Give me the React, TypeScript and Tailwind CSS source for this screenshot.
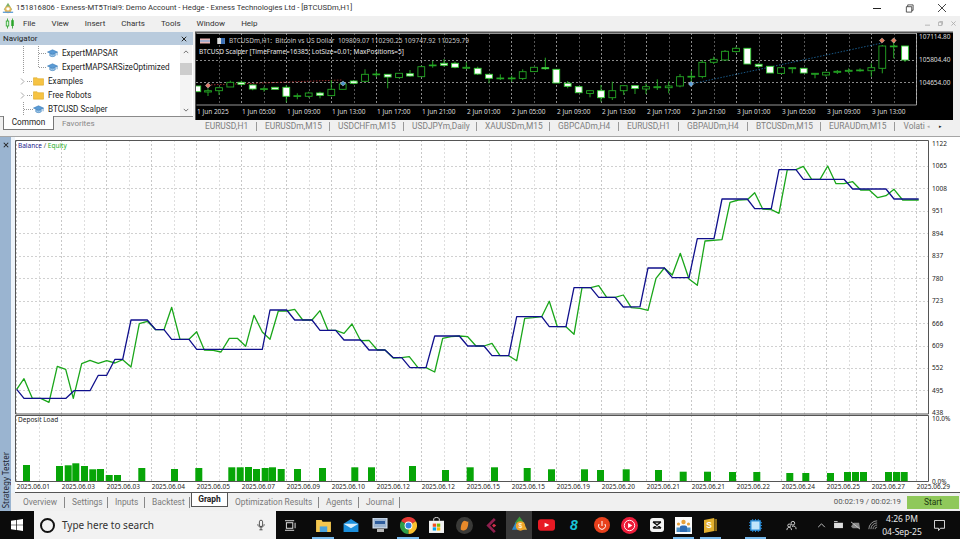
import React from "react";

type P = [number, number];
const z = (a: number[], ox: number, oy: number): P[] => {
  const r: P[] = [];
  for (let i = 0; i < a.length; i += 2) r.push([ox + a[i] / 3, oy + a[i + 1] / 3]);
  return r;
};
const pts = (p: P[]) => p.map((q) => `${q[0].toFixed(1)},${q[1].toFixed(1)}`).join(" ");

const balance = [
  ...z([50,358,72,385,198,385,222,362,270,362,295,316,320,316,345,268,368,268,393,150,442,150,467,179,492,179,515,208,567,208,590,238,787,238,810,120,860,120,884,150,936,150], 0, 270),
  ...z([0,181,47,181,72,210,122,210,147,240,195,240,220,263,245,263,270,293,318,293,344,198,418,198,443,228,492,228,516,257,566,257,590,140,665,140,688,170,738,170,762,53,812,53,836,82,886,82,910,111], 320, 270),
  ...z([0,515,24,399,73,399,97,428,147,428,172,311,222,311,246,192,322,192,344,221,394,221,417,104,468,104,490,133,612,133,638,162,738,162,762,192,836,192], 640, 135),
];
const equity = [
  ...z([50,358,72,326,97,385,122,385,147,397,172,289,197,298,220,385,245,281,270,271,295,280,320,272,345,279,368,269,393,291,418,161,442,154,467,179,492,179,515,112,540,208,567,208,590,185,613,240,640,241,663,246,688,205,712,205,737,229,762,136,787,186,810,208,835,123,860,123,884,118,908,150,936,150], 0, 270),
  ...z([0,122,24,181,47,181,72,190,96,162,122,212,147,211,172,240,195,240,220,264,245,263,268,260,294,293,318,293,344,306,368,205,393,200,418,198,443,200,468,228,492,228,516,220,540,257,566,257,590,272,614,145,640,143,665,140,688,94,712,170,738,170,762,193,786,53,812,53,836,47,860,82,886,82,910,75,934,113], 320, 270),
  ...z([0,520,24,526,48,430,73,399,97,420,121,355,147,432,172,451,195,318,246,314,270,202,295,195,322,194,344,173,368,222,394,224,417,235,442,104,468,104,490,94,515,133,540,133,563,93,588,146,612,146,638,140,662,165,688,165,713,188,738,182,762,163,788,195,836,195], 640, 135),
];

const barsL: number[][] = [[69,195],[168,198],[194,196],[217,190],[243,198],[268,208],[291,207],[317,225],[342,225],[415,204],[513,207],[586,204],[685,202],[710,202],[735,201],[759,207],[785,204],[807,202],[833,207],[882,207],[957,204],[1054,202],[1104,202],[1227,198],[1326,210],[1400,202]];
const barsR: number[][] = [[33,202],[131,204],[204,208],[303,208],[351,210],[428,208],[525,210],[599,215],[672,215],[747,216],[820,216],[919,219],[967,219],[1041,219],[1092,216],[1116,216],[1140,216],[1215,216],[1239,216],[1262,216]];
const bars = [
  ...barsL.map(([x, t]) => ({ x: x / 3, t: 400 + t / 3 })),
  ...barsR.map(([x, t]) => ({ x: 480 + x / 3, t: 400 + t / 3 })),
];

const cL: (number | boolean)[][] = [
  [22,183,200,183,200,true],[54,197,201,190,213,false],[87,188,197,188,210,false],[121,172,186,167,186,false],[154,172,178,167,182,true],[188,180,192,178,196,true],[222,191,193,185,200,false],[255,187,193,187,193,true],[289,187,214,180,232,true],[322,212,214,205,223,false],[356,204,214,200,218,false],[390,204,211,200,220,true],[424,193,212,165,214,false],[458,177,193,170,193,false],[491,168,175,165,178,true],[525,148,169,133,170,false],[559,147,149,138,156,false],[593,148,156,148,190,true],[627,145,158,145,160,false],[660,146,153,135,155,true],[694,125,155,122,156,false],[728,120,122,108,128,false],[762,115,121,102,125,true],[795,115,127,110,130,true],[829,127,130,112,132,false],[863,130,147,125,150,true],[897,148,160,148,175,true],[931,159,161,148,165,false],[965,159,161,152,170,false],[998,140,160,133,165,false],[1032,127,140,127,140,false],[1066,128,131,98,135,true],[1099,133,174,133,174,true],[1133,175,184,168,190,true],
];
const cR: (number | boolean)[][] = [
  [26,260,278,260,278,true],[60,272,280,272,292,false],[93,272,293,255,305,true],[127,272,293,245,300,false],[161,257,272,257,285,false],[195,257,265,257,282,true],[228,260,267,250,282,false],[262,260,263,238,270,false],[296,258,263,245,280,false],[330,230,258,222,262,false],[364,229,231,212,245,false],[397,187,230,180,235,false],[431,178,187,170,192,false],[465,154,180,150,182,false],[498,145,155,140,158,false],[532,145,192,145,192,true],[566,193,199,190,205,true],[600,199,219,199,219,true],[633,203,220,203,220,false],[667,203,206,203,220,false],[701,205,219,205,219,true],[735,220,223,220,235,false],[768,217,225,215,230,false],[802,214,217,210,222,false],[836,211,214,205,220,false],[870,210,212,205,215,false],[904,203,212,190,230,false],[937,138,205,135,220,false],[971,138,140,125,175,false],[1005,138,180,138,186,true],
];
const candles = [
  ...cL.map((c) => ({ x: 190 + (c[0] as number) / 3, a: 25 + (c[1] as number) / 3, b: 25 + (c[2] as number) / 3, h: 25 + (c[3] as number) / 3, l: 25 + (c[4] as number) / 3, w: c[5] as boolean })),
  ...cR.map((c) => ({ x: 570 + (c[0] as number) / 3, a: (c[1] as number) / 3, b: (c[2] as number) / 3, h: (c[3] as number) / 3, l: (c[4] as number) / 3, w: c[5] as boolean })),
];

const miniDates = ["1 Jun 2025","1 Jun 05:00","1 Jun 09:00","1 Jun 13:00","1 Jun 17:00","1 Jun 21:00","2 Jun 01:00","2 Jun 05:00","2 Jun 09:00","2 Jun 13:00","2 Jun 17:00","2 Jun 21:00","3 Jun 01:00","3 Jun 05:00","3 Jun 09:00","3 Jun 13:00"];
const dates = ["01","03","03","04","05","07","09","10","12","12","15","15","19","20","21","21","22","24","25","27","29"];
const yLabels = [1122,1065,1008,951,894,837,780,723,666,609,552,495,438];
const chartTabs = [
  ["EURUSD,H1", 42], ["EURUSDm,M15", 55], ["USDCHFm,M15", 56], ["USDJPYm,Daily", 55], ["XAUUSDm,M15", 55], ["GBPCADm,H4", 51], ["EURUSD,H1", 42], ["GBPAUDm,H4", 51], ["BTCUSDm,M15", 55], ["EURAUDm,M15", 56],
] as const;

const vGrid = Array.from({ length: 41 }, (_, i) => Math.floor(16.7 + i * 22.5) + 0.5);

function Cap({ className = "" }: { className?: string }) {
  return (
    <svg viewBox="0 0 12 10" className={`w-[11px] h-[10px] shrink-0 ${className}`}>
      <path d="M0.5 4 6 1.5 11.5 4 6 6.5Z" fill="#5b9bd5" stroke="#2f75b5" strokeWidth="0.6" />
      <path d="M3 5.5V8C4.5 9.3 7.5 9.3 9 8V5.5L6 7Z" fill="#9cc6e8" stroke="#2f75b5" strokeWidth="0.6" />
      <path d="M11 4V7.5" stroke="#2f75b5" strokeWidth="0.7" />
    </svg>
  );
}
function Folder() {
  return (
    <svg viewBox="0 0 12 10" className="w-[11px] h-[10px] shrink-0">
      <path d="M0.5 1.5H4.5L5.5 2.5H11.5V9.5H0.5Z" fill="#f6c343" stroke="#d9a520" strokeWidth="0.6" />
    </svg>
  );
}
function Guide({ w, v1, v2, half, hFrom, hTo, chev }: { w: number; v1?: boolean; v2?: boolean; half?: boolean; hFrom?: number; hTo?: number; chev?: boolean }) {
  return (
    <svg width={w} height={14} className="shrink-0">
      {v1 && <path d="M23.5 0V14" stroke="#999" strokeDasharray="1 1" />}
      {v2 && <path d={half ? "M38.5 0V7" : "M38.5 0V14"} stroke="#999" strokeDasharray="1 1" />}
      {hFrom !== undefined && <path d={`M${hFrom} 7.5H${hTo}`} stroke="#999" strokeDasharray="1 1" />}
      {chev && <path d="M21 4.5 24 7.5 21 10.5" fill="none" stroke="#aaa" />}
    </svg>
  );
}
function NavRow({ guide, icon, label }: { guide: React.ReactNode; icon: React.ReactNode; label: string }) {
  return (
    <div className="flex items-center h-[14px]">
      {guide}
      {icon}
      <span className="ml-[4px] text-[8.15px] leading-[14px] text-[#222] whitespace-nowrap">{label}</span>
    </div>
  );
}

function Navigator() {
  return (
    <div className="w-[193px] h-[98px] mt-[1px] flex flex-col bg-white shrink-0 font-['Roboto',sans-serif]">
      <div className="h-[13px] bg-[#b9cbdd] flex items-center justify-between pl-[3px] pr-[6px]">
        <span className="text-[8px] text-[#222]">Navigator</span>
        <svg viewBox="0 0 8 8" className="w-[6px] h-[6px]"><path d="M1 1 7 7M7 1 1 7" stroke="#222" strokeWidth="1.3" /></svg>
      </div>
      <div className="flex h-[71px]">
        <div className="flex-1 pt-[1px]">
          <NavRow guide={<Guide w={47} v1 v2 hFrom={39} hTo={47} />} icon={<Cap />} label="ExpertMAPSAR" />
          <NavRow guide={<Guide w={47} v1 v2 half hFrom={39} hTo={47} />} icon={<Cap />} label="ExpertMAPSARSizeOptimized" />
          <NavRow guide={<Guide w={33} chev hFrom={27} hTo={33} />} icon={<Folder />} label="Examples" />
          <NavRow guide={<Guide w={33} chev hFrom={27} hTo={33} />} icon={<Folder />} label="Free Robots" />
          <NavRow guide={<Guide w={33} v1 hFrom={24} hTo={33} />} icon={<Cap />} label="BTCUSD Scalper" />
        </div>
        <div className="w-[12px] mr-[1px] flex flex-col items-center bg-[#f4f4f4]">
          <svg viewBox="0 0 8 5" className="w-[6px] h-[4px] mt-[5px]"><path d="M1 4 4 1 7 4" fill="none" stroke="#666" strokeWidth="1.2" /></svg>
          <div className="w-full h-[12px] mt-[9px] bg-[#cdcdcd]" />
          <svg viewBox="0 0 8 5" className="w-[6px] h-[4px] mt-auto mb-[4px]"><path d="M1 1 4 4 7 1" fill="none" stroke="#666" strokeWidth="1.2" /></svg>
        </div>
      </div>
      <div className="h-[14px] bg-[#f0f0f0] border-t border-[#8a8a8a] flex pl-[3px]">
        <div className="w-[51px] h-[14px] -mt-[1px] bg-white border-l border-r border-b border-[#777] text-[8.2px] leading-[13px] text-center text-[#222]">Common</div>
        <div className="pl-[8px] text-[8px] leading-[13px] text-[#888]">Favorites</div>
      </div>
    </div>
  );
}

function MiniChart() {
  return (
    <div className="relative h-[88px] bg-black flex flex-col border-l border-t border-[#555]">
      <div className="absolute left-[4px] top-[3px] flex items-center">
        <svg viewBox="0 0 16 8" className="w-[10px] h-[6px] shrink-0"><rect width="16" height="8" fill="#e9b8b8" /><rect y="3" width="16" height="2" fill="#7fa6d8" /></svg>
        <svg viewBox="0 0 10 8" className="w-[8px] h-[6px] ml-[7px] shrink-0"><rect width="10" height="8" fill="#ddd" /><rect x="5" width="5" height="8" fill="#3a6fb5" /></svg>
        <span className="ml-[4px] text-[6.5px] leading-[9px] text-[#c8c8c8] whitespace-pre">BTCUSDm,H1:  Bitcoin vs US Dollar  109809.07 110290.25 109747.92 110259.79</span>
      </div>
      <div className="absolute left-[3px] top-[14px] text-[6.5px] leading-[9px] text-[#e8e8e8] whitespace-nowrap">BTCUSD Scalper [TimeFrame=16385; LotSize=0.01; MaxPositions=5]</div>
      <div className="flex h-[73px]">
        <svg viewBox="196 33 722 73" className="w-[722px] h-[73px] shrink-0">
          {Array.from({ length: 33 }, (_, i) => (
            <path key={i} d={`M${Math.floor(219 + i * 22.5) + 0.5} 33V105`} stroke={i % 2 === 1 ? "#8a8a8a" : "#555"} strokeDasharray="2 2" />
          ))}
          {[60.5, 82.5].map((y) => (
            <path key={y} d={`M196 ${y}H917`} stroke="#8a8a8a" strokeDasharray="2 2" />
          ))}
          <path d="M208 85 342 80" stroke="#b33" strokeDasharray="1.5 1.5" strokeWidth="0.8" fill="none" />
          <path d="M691 84 882 43" stroke="#1f6fa8" strokeDasharray="1.5 1.5" strokeWidth="0.8" fill="none" />
          {candles.map((c, i) => (
            <g key={i}>
              <path d={`M${c.x.toFixed(1)} ${c.h.toFixed(1)}V${c.l.toFixed(1)}`} stroke="#28b428" strokeWidth="0.9" />
              <rect x={(c.x - 3.4).toFixed(1)} y={c.a.toFixed(1)} width="6.8" height={Math.max(c.b - c.a, 0.8).toFixed(1)} fill={c.w ? "#ffffff" : "#000000"} stroke={c.w ? "#35d035" : "#24a824"} strokeWidth="0.9" />
            </g>
          ))}
          {[[208, 85.5, "#e07a6a"], [882, 40.5, "#e07a5a"], [893.7, 40.5, "#e07a5a"], [343, 83.5, "#4a90c8"], [691, 84, "#5aa0dc"]].map(([x, y, f], i) => (
            <path key={i} d={`M${(x as number) - 2.6} ${y}L${x} ${(y as number) - 2.6}L${(x as number) + 2.6} ${y}L${x} ${(y as number) + 2.6}Z`} fill={f as string} stroke="#eee" strokeWidth="0.4" />
          ))}
          <path d="M196.5 33.5H916.5V105H196.5" fill="none" stroke="#bbb" strokeWidth="0.8" />
        </svg>
        <div className="flex flex-col pl-[1px]">
          {["107114.80", "105804.40", "104654.00"].map((t) => (
            <div key={t} className="h-[23px] text-[6.5px] leading-[8px] text-[#ddd]">{t}</div>
          ))}
        </div>
      </div>
      <div className="flex pl-[1px] pt-[1px]">
        {miniDates.map((d, i) => (
          <div key={i} className="w-[45px] shrink-0 text-[6.5px] leading-[9px] text-[#ddd] whitespace-nowrap">{d}</div>
        ))}
      </div>
    </div>
  );
}

function ChartTabs() {
  return (
    <div className="h-[13px] bg-[#f0f0f0] flex items-center pl-[2px] text-[8.4px] text-[#808080] whitespace-nowrap overflow-hidden font-['Roboto',sans-serif]">
      {chartTabs.map(([t, w], i) => (
        <div key={i} className="flex items-center h-[9px] px-[8.5px] border-r border-[#999] first:pl-[8px]">
          <span className="inline-block" style={{ width: w }}>{t}</span>
        </div>
      ))}
      <span className="pl-[9px] w-[30px]">Volati</span>
      <span className="ml-[2px] text-[5px] text-[#aaa]">◂</span>
      <span className="ml-[9px] text-[5px] text-[#222]">▸</span>
    </div>
  );
}

function Tester() {
  const bTabs = [
    ["Overview", 35], ["Settings", 29], ["Inputs", 23], ["Backtest", 31],
  ] as const;
  const aTabs = [["Optimization Results", 77], ["Agents", 26], ["Journal", 27]] as const;
  return (
    <div className="flex flex-col h-[378px]">
      <div className="h-[4px] bg-[#f0f0f0] border-b border-[#a5a5a5]" />
      <div className="flex h-[374px] bg-white">
        <div className="w-[11px] bg-[#9ab4d0] flex flex-col items-center justify-between pt-[5px] pb-[3px] shrink-0">
          <svg viewBox="0 0 8 8" className="w-[6px] h-[6px]"><path d="M1 1 7 7M7 1 1 7" stroke="#222" strokeWidth="1.4" /></svg>
          <span className="text-[8px] leading-[11px] text-[#1c2430] [writing-mode:vertical-rl] rotate-180 whitespace-nowrap">Strategy Tester</span>
        </div>
        <div className="w-[4px] bg-[#eef4fa] shrink-0" />
        <div className="flex-1 min-w-0 flex flex-col pt-[3px]">
          <div className="flex h-[275px]">
            <div className="relative w-[914px] h-[275px] shrink-0">
              <svg viewBox="15 140 914 275" className="w-[914px] h-[275px]">
                {vGrid.map((x, i) => (
                  <path key={i} d={`M${x} 140V414`} stroke={i % 2 === 0 ? "#c8c8c8" : "#dedede"} strokeDasharray="2 2" />
                ))}
                {yLabels.slice(1, -1).map((_, i) => (
                  <path key={i} d={`M15 ${Math.floor(166.45 + i * 22.45) + 0.5}H928`} stroke="#d0d0d0" strokeDasharray="2 2" />
                ))}
                <polyline points={pts(equity)} fill="none" stroke="#1aa61a" strokeWidth="1.3" strokeLinejoin="round" />
                <polyline points={pts(balance)} fill="none" stroke="#10108c" strokeWidth="1.3" strokeLinejoin="round" />
                <path d="M15.5 414V140.5H928.5V414Z" fill="none" stroke="#555" strokeWidth="1" />
              </svg>
              <div className="absolute left-[3px] top-[2px] text-[6.5px] leading-[8px] whitespace-nowrap">
                <span className="text-[#1c1c8c]">Balance</span>
                <span className="text-[#555]"> / </span>
                <span className="text-[#1fae1f]">Equity</span>
              </div>
            </div>
            <div className="pl-[3px] flex flex-col">
              {yLabels.map((y) => (
                <div key={y} className="h-[22.45px] shrink-0 text-[6.5px] leading-[8px] text-[#222]">{y}</div>
              ))}
            </div>
          </div>
          <div className="flex h-[67px]">
            <div className="relative w-[914px] h-[67px] shrink-0">
              <svg viewBox="15 415 914 67" className="w-[914px] h-[67px]">
                {vGrid.map((x, i) => (
                  <path key={i} d={`M${x} 415V481`} stroke={i % 2 === 0 ? "#c8c8c8" : "#dedede"} strokeDasharray="2 2" />
                ))}
                {bars.map((b, i) => (
                  <rect key={i} x={b.x.toFixed(1)} y={b.t.toFixed(1)} width="7" height={(481 - b.t).toFixed(1)} fill="#07a507" />
                ))}
                <path d="M15.5 481.5V415.5H928.5V481.5Z" fill="none" stroke="#555" strokeWidth="1" />
              </svg>
              <div className="absolute left-[3px] top-[1px] text-[6.5px] leading-[8px] text-[#222] whitespace-nowrap">Deposit Load</div>
            </div>
            <div className="pl-[3px] flex flex-col justify-between h-[71px] shrink-0">
              <div className="text-[6.5px] leading-[8px] text-[#222]">10.0%</div>
              <div className="text-[6.5px] leading-[8px] text-[#222]">0.0%</div>
            </div>
          </div>
          <div className="flex h-[11px] pl-[1.7px] border-b border-[#555] overflow-hidden shrink-0">
            {dates.map((d, i) => (
              <div key={i} className="w-[45px] shrink-0 text-[6.5px] leading-[9px] text-[#222] whitespace-nowrap">2025.06.{d}</div>
            ))}
          </div>
          <div className="h-[18px] -ml-[4px] bg-[#f0f0f0] flex items-center text-[8.4px] text-[#7a7a7a] whitespace-nowrap font-['Roboto',sans-serif]">
            <div className="w-[5px]" />
            {bTabs.map(([t, w]) => (
              <div key={t} className="flex items-center h-[11px] pl-[7px] pr-[6px] border-r border-[#888]">
                <span className="inline-block" style={{ width: w }}>{t}</span>
              </div>
            ))}
            <div className="w-[37px] h-[14px] ml-[1px] self-start bg-white border-l border-r border-b border-[#555] text-center leading-[13px] font-bold text-[#222]">Graph</div>
            {aTabs.map(([t, w]) => (
              <div key={t} className="flex items-center h-[11px] pl-[7px] pr-[6px] border-r border-[#888] last:border-r-0">
                <span className="inline-block" style={{ width: w }}>{t}</span>
              </div>
            ))}
            <div className="ml-auto text-[7.8px] text-[#555] pr-[6px]">00:02:19 / 00:02:19</div>
            <div className="w-[52px] h-[13px] mr-[1px] bg-[#8fc85a] text-[#1c3a10] text-center leading-[13px]">Start</div>
          </div>
        </div>
      </div>
    </div>
  );
}

function Slot({ w, active, bar, children }: { w: number; active?: boolean; bar?: boolean; children: React.ReactNode }) {
  return (
    <div className={`relative h-[28px] shrink-0 flex items-center justify-center ${active ? "bg-[#3a3a3a]" : ""}`} style={{ width: w }}>
      {children}
      {bar && <div className="absolute bottom-0 left-[3px] right-[3px] h-[2px] bg-[#76b9ed]" />}
    </div>
  );
}

function Taskbar() {
  return (
    <div className="h-[28px] bg-[#0b0b0b] flex items-center shrink-0">
      <div className="w-[34px] flex justify-center">
        <svg viewBox="0 0 12 12" className="w-[12px] h-[12px]"><path d="M0 1.7 5 1V5.7H0ZM5.7 .9 12 0V5.7H5.7ZM0 6.3H5V11L0 10.3ZM5.7 6.3H12V12L5.7 11.1Z" fill="#fff" /></svg>
      </div>
      <div className="w-[242px] h-[28px] bg-[#f2f2f2] flex items-center pl-[6px] pr-[11px] shrink-0">
        <div className="w-[15px] h-[15px] rounded-full border-2 border-[#111]" />
        <span className="ml-[7px] text-[10px] text-[#333]">Type here to search</span>
        <svg viewBox="0 0 10 14" className="ml-auto w-[8px] h-[12px]"><rect x="3" y="1" width="4" height="8" rx="2" fill="none" stroke="#333" /><path d="M1 6C1 11 9 11 9 6M5 10V13M3 13H7" fill="none" stroke="#333" /></svg>
      </div>
      <Slot w={33}>
        <svg viewBox="0 0 12 12" className="w-[11px] h-[11px] -ml-[5px]"><rect x="1.5" y="3" width="7" height="6" fill="none" stroke="#eee" /><path d="M0 .8H10M0 11.2H10M11 3V9" stroke="#eee" /></svg>
      </Slot>
      <Slot w={28} bar><svg viewBox="0 0 16 14" className="w-[15px] h-[13px]"><path d="M0 1H6L7 3H16V14H0Z" fill="#f4c750" /><rect x="4" y="8" width="8" height="6" fill="#4aa3df" /></svg></Slot>
      <Slot w={28}><svg viewBox="0 0 16 14" className="w-[16px] h-[13px]"><path d="M0 5 8 0 16 5V14H0Z" fill="#1b8fdc" /><path d="M0 5 8 10 16 5" fill="#d8eefc" /></svg></Slot>
      <Slot w={29}><svg viewBox="0 0 16 15" className="w-[16px] h-[15px]"><rect x="1" y="0" width="14" height="10" fill="#9eb6d2" stroke="#dfe8f2" /><rect x="3" y="3" width="10" height="3" fill="#2f5e9e" /><rect x="5" y="11" width="7" height="3" fill="#b5b5b5" /></svg></Slot>
      <Slot w={28} bar>
        <svg viewBox="0 0 20 20" className="w-[17px] h-[17px]">
          <path d="M10 10 18.7 5A10 10 0 0 0 1.3 5Z" fill="#e53935" />
          <path d="M10 10 1.3 5A10 10 0 0 0 10 20Z" fill="#2e9e48" />
          <path d="M10 10 10 20A10 10 0 0 0 18.7 5Z" fill="#fbc02d" />
          <circle cx="10" cy="10" r="4.6" fill="#fff" /><circle cx="10" cy="10" r="3.5" fill="#2f7fe0" />
        </svg>
      </Slot>
      <Slot w={28}><svg viewBox="0 0 16 17" className="w-[15px] h-[16px]"><path d="M5 4V2C5 0 11 0 11 2V4" fill="none" stroke="#eee" /><rect y="4" width="16" height="13" fill="#f2f2f2" /><rect x="4" y="7" width="3.6" height="3.4" fill="#f25022" /><rect x="8.4" y="7" width="3.6" height="3.4" fill="#7fba00" /><rect x="4" y="11" width="3.6" height="3.4" fill="#00a4ef" /><rect x="8.4" y="11" width="3.6" height="3.4" fill="#ffb900" /></svg></Slot>
      <Slot w={28}><svg viewBox="0 0 18 18" className="w-[17px] h-[17px]"><circle cx="9" cy="9" r="9" fill="#3a3a38" /><path d="M5 13C5 8 7 4 9 4C11 4 12 6 13 4.5C13 8 13 13 9 14C7 14.5 5 14 5 13Z" fill="#e8892a" /></svg></Slot>
      <Slot w={28}><svg viewBox="0 0 14 16" className="w-[14px] h-[15px]"><path d="M9 0 1 8 9 16 11 14 5 8 11 2Z" fill="#8e1f4d" /><path d="M9 6 11.5 8 9 10 7 8Z" fill="#d3304b" /></svg></Slot>
      <Slot w={26} active><svg viewBox="0 0 18 18" className="w-[17px] h-[18px]"><path d="M9 0 14 7H4Z" fill="#3d9a3d" /><path d="M1 14 5 6 9 14Z" fill="#2d8ac9" /><path d="M9 14 13 6 17 14Z" fill="#e8b23a" /><circle cx="10" cy="10" r="5" fill="#efa52a" /><text x="10" y="12.5" fontSize="7" textAnchor="middle" fill="#fff" fontFamily="Liberation Sans">$</text></svg></Slot>
      <Slot w={28}><svg viewBox="0 0 18 12" className="w-[17px] h-[12px]"><rect width="18" height="12" rx="3" fill="#e81a24" /><path d="M7 3.5 12 6 7 8.5Z" fill="#fff" /></svg></Slot>
      <Slot w={28}><span className="text-[14px] leading-[14px] italic font-bold text-[#19c4d8] font-['Liberation_Sans',sans-serif]">8</span></Slot>
      <Slot w={27}><svg viewBox="0 0 16 16" className="w-[16px] h-[16px]"><circle cx="8" cy="8" r="8" fill="#e8401c" /><path d="M5 7A3.5 3.5 0 1 0 11 7M8 4V9" fill="none" stroke="#fff" /></svg></Slot>
      <Slot w={28}><svg viewBox="0 0 18 18" className="w-[17px] h-[17px]"><circle cx="9" cy="9" r="9" fill="#ee1c3a" /><circle cx="9" cy="9" r="5.5" fill="none" stroke="#fff" /><path d="M7.5 6.3 12 9 7.5 11.7Z" fill="#fff" /></svg></Slot>
      <Slot w={27}><svg viewBox="0 0 14 14" className="w-[14px] h-[14px]"><rect width="14" height="14" rx="3" fill="#f4f4f4" /><path d="M3 4 11 10M11 4 3 10M3 4H11M3 10H11" stroke="#111" strokeWidth="1.5" fill="none" /></svg></Slot>
      <Slot w={27} bar><svg viewBox="0 0 17 17" className="w-[17px] h-[17px]"><rect width="17" height="17" fill="#fafafa" /><circle cx="8.5" cy="5" r="2.2" fill="#e8a13a" /><path d="M5 15V9.5C5 8 12 8 12 9.5V15Z" fill="#2f6db5" /><circle cx="3.5" cy="7" r="1.6" fill="#e8a13a" /><path d="M1.5 15V10.5H5V15Z" fill="#4a90c8" /><circle cx="13.5" cy="7" r="1.6" fill="#e8a13a" /><path d="M12 15V10.5H15.5V15Z" fill="#4a90c8" /></svg></Slot>
      <Slot w={27} bar><svg viewBox="0 0 14 16" className="w-[13px] h-[15px]"><path d="M0 2 11 0V14L0 16Z" fill="#e2b02f" /><path d="M11 1H14V14H11Z" fill="#8a6a16" /><text x="5.5" y="11" fontSize="9" fontWeight="700" textAnchor="middle" fill="#fff" fontFamily="Liberation Sans">S</text></svg></Slot>
      <div className="w-[18px] shrink-0" />
      <Slot w={27} bar><svg viewBox="0 0 14 14" className="w-[13px] h-[13px]"><rect x="2" y="2" width="10" height="10" fill="#bfe4fb" stroke="#2a8fdc" strokeWidth="1.4" /><path d="M4 0V2M7 0V2M10 0V2M4 12V14M7 12V14M10 12V14M0 4H2M0 7H2M0 10H2M12 4H14M12 7H14M12 10H14" stroke="#2a8fdc" /></svg></Slot>
      <div className="w-[13px] shrink-0" />
      <div className="w-[18px] shrink-0 flex justify-center"><svg viewBox="0 0 12 12" className="w-[11px] h-[11px]"><circle cx="7.5" cy="3.5" r="2" fill="none" stroke="#ddd" /><circle cx="3.5" cy="6" r="1.6" fill="none" stroke="#ddd" /><path d="M1 11C1 9 2 8 3.5 8S6 9 6 11M6.5 7C9 6 11 7 11 10" fill="none" stroke="#ddd" /></svg></div>
      <div className="w-[13px] shrink-0" />
      <div className="w-[17px] shrink-0 flex justify-center"><svg viewBox="0 0 10 6" className="w-[9px] h-[5px]"><path d="M1 5 5 1 9 5" fill="none" stroke="#ddd" /></svg></div>
      <div className="w-[17px] shrink-0 flex justify-center"><svg viewBox="0 0 12 9" className="w-[11px] h-[8px]"><rect x="1" y="2" width="10" height="6" fill="#ddd" /><path d="M1 .5H5" stroke="#ddd" /></svg></div>
      <div className="w-[17px] shrink-0 flex justify-center"><svg viewBox="0 0 12 10" className="w-[11px] h-[9px]"><path d="M1 6 4 2H10L11 8H3Z" fill="#888" /><path d="M1 1 11 9" stroke="#ccc" /></svg></div>
      <div className="w-[17px] shrink-0 flex justify-center"><svg viewBox="0 0 12 12" className="w-[10px] h-[10px]"><path d="M1 11A10 10 0 0 1 11 1M3.5 11A7.5 7.5 0 0 1 11 3.5M6 11A5 5 0 0 1 11 6M8.5 11A2.5 2.5 0 0 1 11 8.5" fill="none" stroke="#aaa" /></svg></div>
      <div className="w-[42px] shrink-0 text-center text-[8.5px] leading-[13px] text-[#e8e8e8]">
        <div>4:26 PM</div>
        <div>04-Sep-25</div>
      </div>
      <div className="w-[32px] shrink-0 flex justify-center"><svg viewBox="0 0 12 12" className="w-[11px] h-[11px]"><path d="M.5 .5H11.5V9H7L5 11.5V9H.5Z" fill="none" stroke="#eee" /></svg></div>
    </div>
  );
}

export default function App() {
  return (
    <div className="w-[960px] h-[539px] overflow-hidden flex flex-col bg-[#f0f0f0] font-['Noto_Sans',sans-serif] text-[#222]">
      <div className="h-[16px] bg-white flex items-center shrink-0">
        <svg viewBox="0 0 14 14" className="w-[12px] h-[12px] ml-[2px]">
          <path d="M7 1 12 9H2Z" fill="#7fb069" /><circle cx="7" cy="9" r="4" fill="#e7b75a" /><circle cx="7" cy="8" r="2" fill="#fff" /><path d="M1 12H13" stroke="#5b9bd5" strokeWidth="1.5" />
        </svg>
        <span className="ml-[2px] text-[7.7px] text-[#333] whitespace-nowrap font-['Roboto',sans-serif]">151816806 - Exness-MT5Trial9: Demo Account - Hedge - Exness Technologies Ltd - [BTCUSDm,H1]</span>
        <div className="ml-auto flex items-center">
          <svg viewBox="0 0 10 10" className="w-[10px] h-[10px] mr-[23px]"><path d="M1 5.5H9" stroke="#222" strokeWidth="1" /></svg>
          <svg viewBox="0 0 10 10" className="w-[9px] h-[9px] mr-[23px]"><path d="M1.5 3H7.5V9H1.5ZM3 3V1H9V7H7.5" fill="none" stroke="#333" strokeWidth="0.9" /></svg>
          <svg viewBox="0 0 10 10" className="w-[10px] h-[10px] mr-[13px]"><path d="M1 1 9 9M9 1 1 9" stroke="#333" strokeWidth="0.9" /></svg>
        </div>
      </div>
      <div className="h-[15px] flex items-center text-[8px] text-[#333] shrink-0 whitespace-nowrap font-['Roboto',sans-serif]">
        <svg viewBox="0 0 12 12" className="w-[10px] h-[11px] ml-[5px]"><path d="M3 0V12M9 0V12" stroke="#2aa52a" /><rect x="1.5" y="3" width="3" height="6" fill="#dff3df" stroke="#2aa52a" /><rect x="7.5" y="2" width="3" height="7" fill="#2aa52a" /></svg>
        <span className="ml-[8px]">File</span>
        <span className="ml-[16px]">View</span>
        <span className="ml-[16px]">Insert</span>
        <span className="ml-[16px]">Charts</span>
        <span className="ml-[16px]">Tools</span>
        <span className="ml-[16px]">Window</span>
        <span className="ml-[16px]">Help</span>
        <div className="ml-auto flex items-center gap-[8px] pr-[4px] mt-[-1px]">
          <svg viewBox="0 0 6 6" className="w-[5px] h-[5px]"><path d="M0 5H6" stroke="#aaa" /></svg>
          <svg viewBox="0 0 6 6" className="w-[5px] h-[5px]"><path d="M.5 1.5H4.5V5.5H.5ZM2 1V.5H5.5V4H5" fill="none" stroke="#aaa" /></svg>
          <svg viewBox="0 0 6 6" className="w-[5px] h-[5px]"><path d="M.5 .5 5.5 5.5M5.5 .5 .5 5.5" stroke="#aaa" /></svg>
        </div>
      </div>
      <div className="flex h-[102px] shrink-0">
        <Navigator />
        <div className="w-[2px] shrink-0" />
        <div className="w-[758px] shrink-0 flex flex-col">
          <div className="h-[1px] bg-[#a0a0a0]" />
          <MiniChart />
          <ChartTabs />
        </div>
      </div>
      <Tester />
      <Taskbar />
    </div>
  );
}
